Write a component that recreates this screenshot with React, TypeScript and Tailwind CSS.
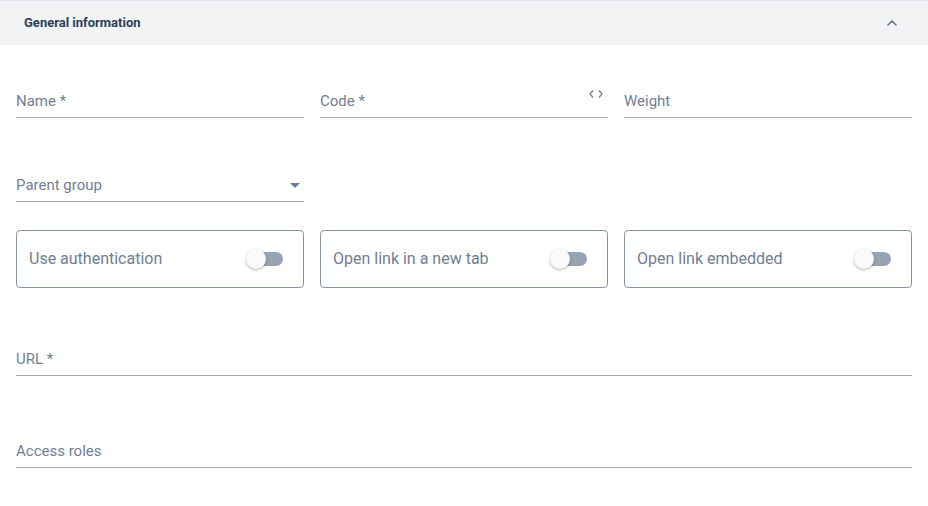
import { ChevronUp } from "lucide-react";

function Field({ label, icon, caret }: { label: string; icon?: boolean; caret?: boolean }) {
  return (
    <div className="relative border-b border-[#a3acb7] pb-2">
      <span className="block text-[15px] leading-4 text-[#6f8093]">{label}</span>
      {icon && (
        <svg
          className="absolute right-[5px] top-[-4px] h-[10px] w-[14px] text-[#6f8093]"
          viewBox="0 0 14 10"
          fill="none"
          stroke="currentColor"
          strokeWidth="1.3"
        >
          <path d="M4 1.5 L1 5 L4 8.5" />
          <path d="M10 1.5 L13 5 L10 8.5" />
        </svg>
      )}
      {caret && (
        <svg className="absolute right-[4px] top-[6px] h-[5px] w-[10px] text-[#6f8093]" viewBox="0 0 10 5">
          <path d="M0 0 L10 0 L5 5 Z" fill="currentColor" />
        </svg>
      )}
    </div>
  );
}

function ToggleCard({ label }: { label: string }) {
  return (
    <div className="flex h-[58px] items-center justify-between rounded border border-[#8594a4] pl-3 pr-5">
      <span className="text-[16px] text-[#6f8093]">{label}</span>
      <div className="relative h-[14px] w-[36px]">
        <div className="absolute right-0 top-0 h-[14px] w-[32px] rounded-full bg-[#95a3b3]" />
        <div className="absolute left-[-1px] top-[-3px] h-[20px] w-[20px] rounded-full bg-[#fafafa] shadow-[0_1px_3px_rgba(0,0,0,0.3)]" />
      </div>
    </div>
  );
}

export default function App() {
  return (
    <div className="min-h-[506px] w-[928px] bg-white font-['Roboto',sans-serif]">
      <div className="flex h-[45px] items-center justify-between border-t border-[#e1e4e8] bg-[#f1f3f5] pl-6 pr-[28px]">
        <span className="text-[13px] font-bold text-[#2c3e5a]">General information</span>
        <ChevronUp className="h-4 w-4 text-[#6a7b8e]" strokeWidth={2.5} />
      </div>

      <div className="px-4">
        <div className="mt-[48px] grid grid-cols-3 gap-4">
          <Field label="Name *" />
          <Field label="Code *" icon />
          <Field label="Weight" />
        </div>

        <div className="mt-[59px] grid grid-cols-3 gap-4">
          <Field label="Parent group" caret />
        </div>

        <div className="mt-[28px] grid grid-cols-3 gap-4">
          <ToggleCard label="Use authentication" />
          <ToggleCard label="Open link in a new tab" />
          <ToggleCard label="Open link embedded" />
        </div>

        <div className="mt-[63px]">
          <Field label="URL *" />
        </div>

        <div className="mt-[67px]">
          <Field label="Access roles" />
        </div>
      </div>
    </div>
  );
}
